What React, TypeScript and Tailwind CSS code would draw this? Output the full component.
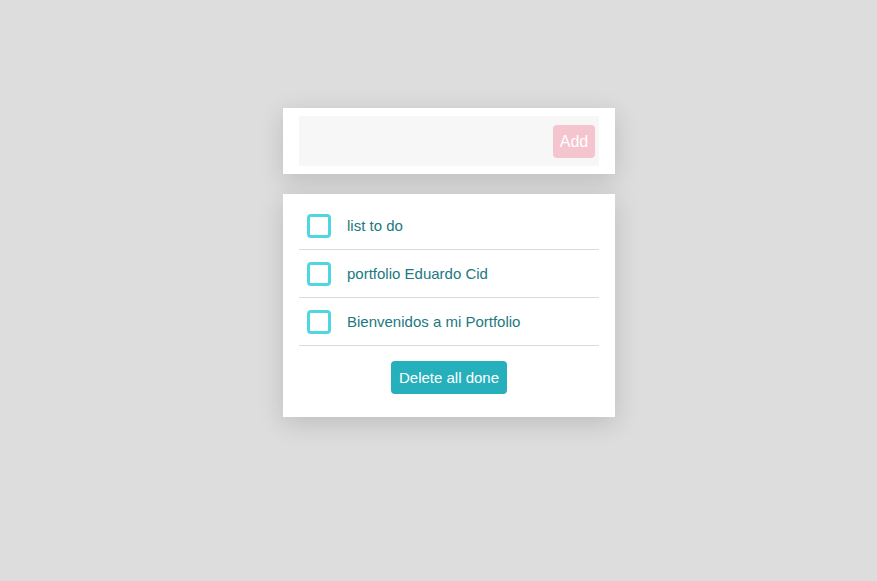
const todos = ["list to do", "portfolio Eduardo Cid", "Bienvenidos a mi Portfolio"];

export default function App() {
  return (
    <div className="min-h-screen bg-[#dddddd] flex flex-col items-center pt-[108px] pl-[21px] font-['Liberation_Sans',Arial,sans-serif]">
      {/* input card */}
      <div className="w-[332px] bg-white px-4 py-2 shadow-[0_6px_24px_rgba(0,0,0,0.15)]">
        <div className="h-[50px] bg-[#f7f7f7] flex items-center justify-end pr-1">
          <button className="h-[33px] w-[42px] rounded-[4px] bg-[#f5c5cf] text-white text-[16px] pt-px">
            Add
          </button>
        </div>
      </div>

      {/* list card */}
      <div className="mt-5 w-[332px] bg-white px-4 pt-2 pb-[23px] shadow-[0_6px_24px_rgba(0,0,0,0.15)]">
        <ul>
          {todos.map((t) => (
            <li key={t} className="h-[48px] flex items-center border-b border-[#dadada] pl-2">
              <span className="w-6 h-6 rounded-[4px] border-[3px] border-[#4fd6e0] shrink-0" />
              <span className="ml-4 pt-[2px] text-[15px] text-[#1b7980]">{t}</span>
            </li>
          ))}
        </ul>
        <div className="flex justify-center mt-[15px]">
          <button className="h-[33px] px-2 pt-px rounded-[4px] bg-[#26b0bc] text-white text-[15px]">
            Delete all done
          </button>
        </div>
      </div>
    </div>
  );
}
